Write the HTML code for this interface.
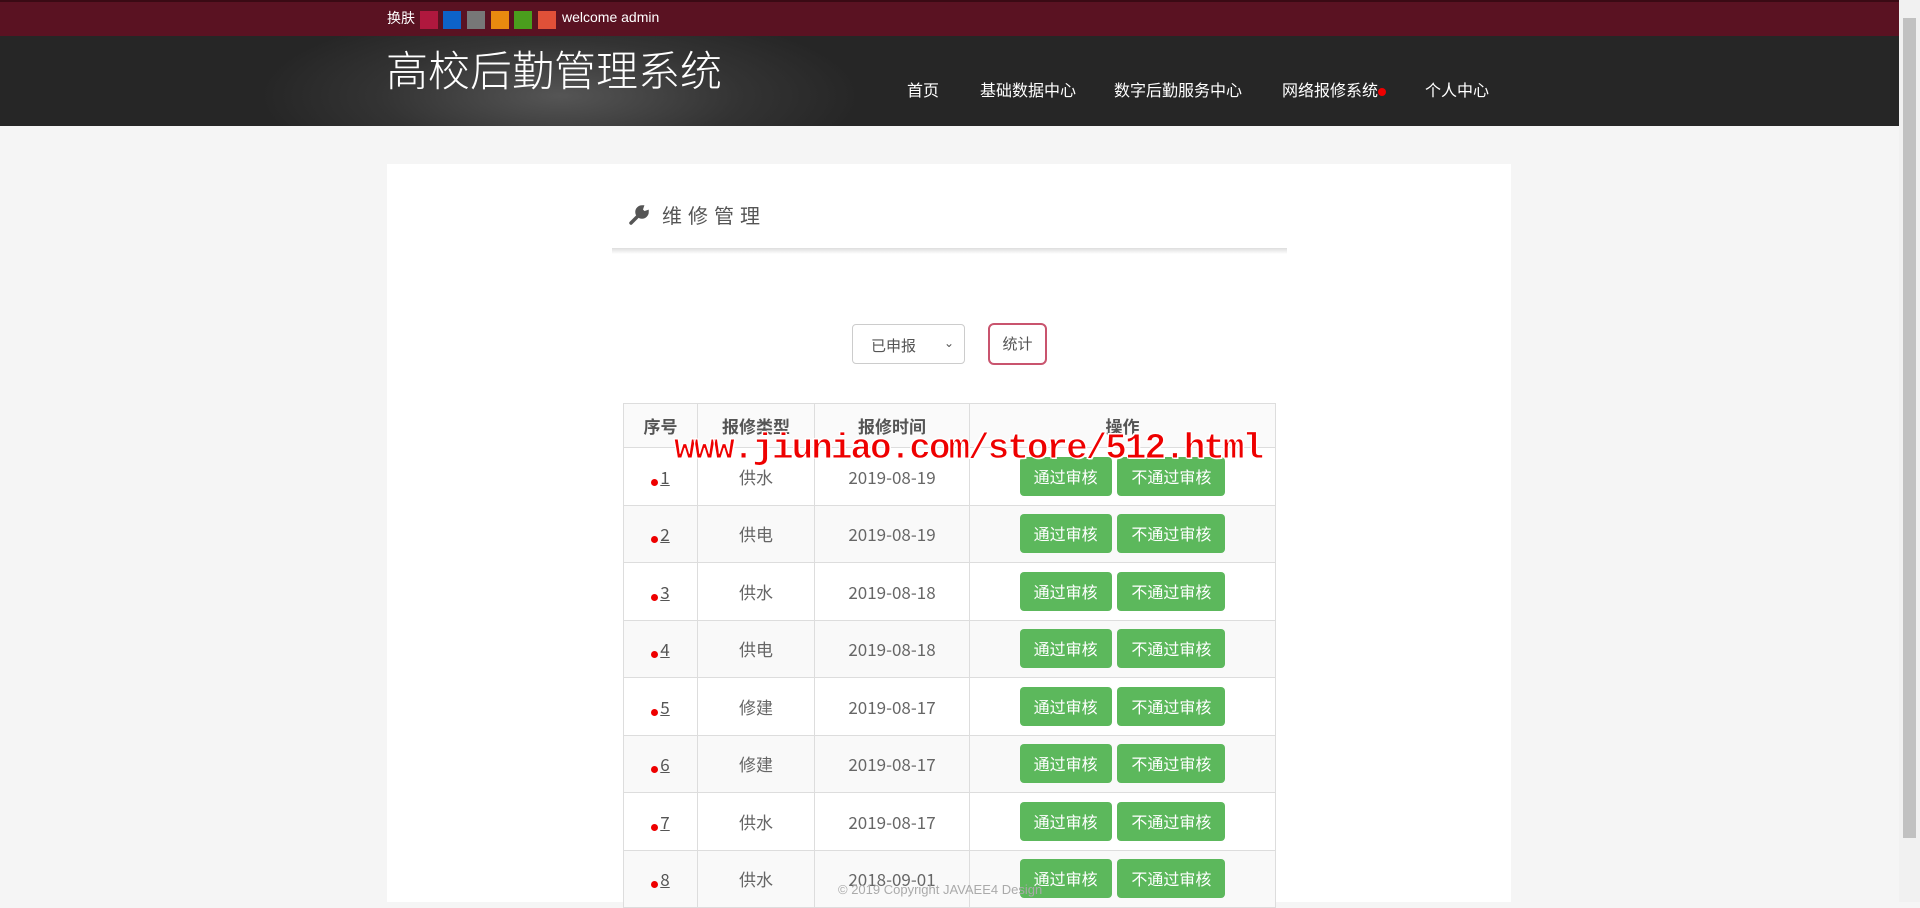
<!DOCTYPE html>
<html><head><meta charset="utf-8"><style>
*{margin:0;padding:0;box-sizing:border-box}
body{width:1920px;height:902px;overflow:hidden;background:#f5f5f5;font-family:"Liberation Sans","Noto Sans CJK SC",sans-serif;position:relative}
.top{position:absolute;left:0;top:0;width:1899px;height:36px;background:#5a1222;border-top:2px solid #3a0a14}
.top span{position:absolute;color:#fff;font-size:14px;top:8px}
.sw{position:absolute;top:9px;width:18px;height:18px}
.hd{position:absolute;left:0;top:36px;width:1899px;height:90px;background:radial-gradient(ellipse 300px 90px at 560px 60px,#555 0%,#333 60%,#262626 100%)}
.title{position:absolute;left:386px;top:2px;color:#fff;font-size:42px;font-family:"Noto Sans CJK SC",sans-serif;font-weight:300}
.nav{position:absolute;top:41px;color:#fff;font-size:16px;font-family:"Noto Sans CJK SC",sans-serif}
.panel{position:absolute;left:387px;top:164px;width:1124px;height:738px;background:#fff}
.sb{position:absolute;left:1899px;top:0;width:21px;height:902px;background:#f1f1f1}
.sb div{position:absolute;left:4px;top:18px;width:13px;height:820px;background:#c1c1c1}
table{position:absolute;left:623px;top:403px;width:653px;border-collapse:collapse;font-size:17px;color:#666;font-family:"Noto Sans CJK SC",sans-serif}
td,th{border:1px solid #ddd;text-align:center;height:57.5px;font-weight:normal}
th{height:44px;font-weight:bold;color:#555;background:#fafafa}
tr:nth-child(odd) td{background:#f9f9f9}
.b{display:inline-block;background:#5cb85c;color:#fff;border-radius:4px;height:39px;line-height:39px;font-size:16px;padding:0 14px;margin:0 1px}
.n{color:#555;text-decoration:underline}
.d{display:inline-block;width:7px;height:7px;border-radius:50%;background:#e00;margin-right:2px;vertical-align:-2px}
</style></head><body>
<div class="top">
<span style="left:387px;top:6px">换肤</span>
<div class="sw" style="left:420px;background:#b0183e"></div>
<div class="sw" style="left:443px;background:#0d63c9"></div>
<div class="sw" style="left:467px;background:#777"></div>
<div class="sw" style="left:491px;background:#e88a0f"></div>
<div class="sw" style="left:514px;background:#4a9e1d"></div>
<div class="sw" style="left:538px;background:#e05038"></div>
<span style="left:562px;top:7px">welcome admin</span>
</div>
<div class="hd">
<div class="title">高校后勤管理系统</div>
<div class="nav" style="left:907px">首页</div>
<div class="nav" style="left:980px">基础数据中心</div>
<div class="nav" style="left:1114px">数字后勤服务中心</div>
<div class="nav" style="left:1282px">网络报修系统<span style="display:inline-block;width:8px;height:8px;border-radius:50%;background:#e00"></span></div>
<div class="nav" style="left:1425px">个人中心</div>
</div>
<div class="panel"></div>
<svg style="position:absolute;left:629px;top:203px" width="22" height="22" viewBox="0 0 22 22"><path d="M2 20 L11 11 M13 4a5 5 0 1 0 5 5l-3 1-3-3z" stroke="#555" stroke-width="3.5" fill="#555" stroke-linecap="round"/></svg>
<div style="position:absolute;left:662px;top:200px;font-size:20px;letter-spacing:6px;color:#555;font-family:'Noto Sans CJK SC',sans-serif">维修管理</div>
<div style="position:absolute;left:612px;top:248px;width:675px;height:6px;background:linear-gradient(#ddd,#fff)"></div>
<div style="position:absolute;left:852px;top:324px;width:113px;height:40px;border:1px solid #ccc;border-radius:4px;font-size:15px;color:#555;padding:10px 0 0 18px;font-family:'Noto Sans CJK SC',sans-serif">已申报<span style="position:absolute;right:10px;top:9px;font-size:12px">⌄</span></div>
<div style="position:absolute;left:988px;top:323px;width:59px;height:42px;border:2px solid #c9546e;border-radius:6px;font-size:15px;color:#555;text-align:center;line-height:38px;font-family:'Noto Sans CJK SC',sans-serif">统计</div>
<table>
<tr><th style="width:74px">序号</th><th style="width:117px">报修类型</th><th style="width:155px">报修时间</th><th>操作</th></tr>
<tr><td><span class="d"></span><span class="n">1</span></td><td>供水</td><td>2019-08-19</td><td><span class="b">通过审核</span> <span class="b">不通过审核</span></td></tr>
<tr><td><span class="d"></span><span class="n">2</span></td><td>供电</td><td>2019-08-19</td><td><span class="b">通过审核</span> <span class="b">不通过审核</span></td></tr>
<tr><td><span class="d"></span><span class="n">3</span></td><td>供水</td><td>2019-08-18</td><td><span class="b">通过审核</span> <span class="b">不通过审核</span></td></tr>
<tr><td><span class="d"></span><span class="n">4</span></td><td>供电</td><td>2019-08-18</td><td><span class="b">通过审核</span> <span class="b">不通过审核</span></td></tr>
<tr><td><span class="d"></span><span class="n">5</span></td><td>修建</td><td>2019-08-17</td><td><span class="b">通过审核</span> <span class="b">不通过审核</span></td></tr>
<tr><td><span class="d"></span><span class="n">6</span></td><td>修建</td><td>2019-08-17</td><td><span class="b">通过审核</span> <span class="b">不通过审核</span></td></tr>
<tr><td><span class="d"></span><span class="n">7</span></td><td>供水</td><td>2019-08-17</td><td><span class="b">通过审核</span> <span class="b">不通过审核</span></td></tr>
<tr><td><span class="d"></span><span class="n">8</span></td><td>供水</td><td>2018-09-01</td><td><span class="b">通过审核</span> <span class="b">不通过审核</span></td></tr>
</table>
<div style="position:absolute;left:838px;top:882px;font-size:13px;color:#aaa">© 2019 Copyright JAVAEE4 Design</div>
<div style="position:absolute;left:674px;top:428px;font-size:36px;font-weight:bold;color:#e00;font-family:'Liberation Mono',monospace;letter-spacing:-2px;-webkit-text-stroke:1px #fff;text-shadow:1px 1px 0 #fff,-1px -1px 0 #fff">www.jiuniao.com/store/512.html</div>
<div class="sb"><div></div></div>
</body></html>
